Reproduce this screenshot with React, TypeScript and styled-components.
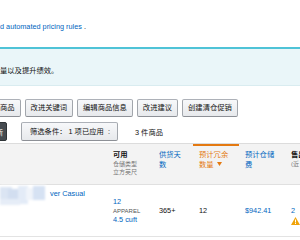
import React from "react";
import styled, { createGlobalStyle, css } from "styled-components";

const Global = createGlobalStyle`
  html, body { margin: 0; padding: 0; background: #fff; overflow: hidden; }
  body {
    font-family: "Liberation Sans", Arial, "Noto Sans CJK SC", sans-serif;
    font-size: 7.3px;
    color: #111;
  }
`;

const Page = styled.div`
  width: 300px;
  height: 240px;
  overflow: hidden;
`;

const TopNote = styled.div`
  height: 47px;
  box-sizing: border-box;
  padding-top: 22px;
  line-height: 10px;
  white-space: nowrap;
`;

const Link = styled.span`
  color: #0066c0;
`;

const InfoBox = styled.div`
  border-top: 2px solid #4fc3d7;
  border-bottom: 1px solid #d9ecf0;
  background: #eaf6f9;
  padding: 17px 0 9px;
  line-height: 10px;
  white-space: nowrap;
`;

const ButtonRow = styled.div`
  display: flex;
  gap: 4px;
  margin: 13px 0 0 -6px;
`;

const Button = styled.button`
  height: 18px;
  box-sizing: border-box;
  padding: 0 5px;
  border: 1px solid #adb1b8;
  border-color: #adb1b8 #a2a6ac #8d9096;
  border-radius: 2px;
  background: linear-gradient(#f7f8fa, #e7e9ec);
  font: inherit;
  color: #111;
  white-space: nowrap;
  line-height: 16px;
  flex: none;
`;

const FilterRow = styled.div`
  display: flex;
  align-items: center;
  margin-top: 5px;
  height: 19px;
`;

const DarkButton = styled.button`
  height: 19px;
  box-sizing: border-box;
  margin-left: -20px;
  width: 27px;
  padding: 0 3px 0 0;
  border: 1px solid #2f3437;
  border-radius: 2px;
  background: #454b50;
  color: #fff;
  font: inherit;
  text-align: right;
  white-space: nowrap;
  overflow: hidden;
  flex: none;
`;

const FilterButton = styled(Button)`
  height: 19px;
  width: 97px;
  margin-left: 14px;
  padding: 0 7px 0 8px;
  display: flex;
  align-items: center;
  justify-content: space-between;
`;

const Count = styled.span`
  margin-left: 17px;
  white-space: nowrap;
`;

const Table = styled.div`
  margin-top: 2px;
  border-top: 1px solid #dcdcdc;
  width: 345px;
`;

const cols = css`
  display: grid;
  grid-template-columns: 107px 46px 40px 46px 46px 60px;
`;

const HeaderRow = styled.div`
  ${cols};
  height: 40px;
  background: #f3f3f3;
  border-bottom: 1px solid #e0e0e0;
`;

const HeadCell = styled.div<{ $tone?: "dark" | "blue" | "orange"; $active?: boolean }>`
  padding: 6px 0 0 6px;
  line-height: 10px;
  white-space: nowrap;
  color: ${(p) => (p.$tone === "blue" ? "#0066c0" : p.$tone === "orange" ? "#e47911" : "#111")};
  font-weight: ${(p) => (p.$tone === "dark" ? 700 : 400)};
  ${(p) => p.$active && css`box-shadow: inset 0 2px 0 #e47911;`}
`;

const SubLine = styled.div`
  font-size: 6px;
  line-height: 8px;
  color: #767676;
  font-weight: 400;
`;

const Caret = styled.svg`
  width: 5px;
  height: 4px;
  margin-left: 3px;
  vertical-align: 1px;
`;

const DataRow = styled.div`
  ${cols};
  height: 51px;
  border-bottom: 1px solid #e3e3e3;
  align-items: center;
`;

const ProductCell = styled.div`
  align-self: start;
  display: flex;
  white-space: nowrap;
`;

const Mosaic = styled.svg`
  width: 46px;
  height: 21px;
  flex: none;
  filter: blur(1px);
`;

const Title = styled.span`
  color: #0066c0;
  margin-left: 4px;
  padding-top: 4px;
  line-height: 10px;
`;

const Cell = styled.div<{ $blue?: boolean }>`
  padding-left: 6px;
  line-height: 10px;
  white-space: nowrap;
  color: ${(p) => (p.$blue ? "#0066c0" : "#111")};
`;

const Small = styled.div`
  font-size: 6px;
  line-height: 8px;
  color: #555;
`;

const BlueLine = styled.div`
  color: #0066c0;
`;

const AlertCell = styled(Cell)`
  padding-top: 9px;
`;

const Warn = styled.svg`
  display: block;
  width: 9px;
  height: 8px;
  margin-top: 1px;
`;

export default function App() {
  return (
    <Page>
      <Global />
      <TopNote>
        <Link>d automated pricing rules</Link> .
      </TopNote>
      <InfoBox>量以及提升绩效。</InfoBox>
      <ButtonRow>
        <Button>商品</Button>
        <Button>改进关键词</Button>
        <Button>编辑商品信息</Button>
        <Button>改进建议</Button>
        <Button>创建清仓促销</Button>
      </ButtonRow>
      <FilterRow>
        <DarkButton>更新</DarkButton>
        <FilterButton>
          <span>筛选条件： 1 项已应用</span>
          <span>:</span>
        </FilterButton>
        <Count>3 件商品</Count>
      </FilterRow>
      <Table>
        <HeaderRow>
          <HeadCell />
          <HeadCell $tone="dark">
            可用
            <SubLine>仓储类型</SubLine>
            <SubLine>立方英尺</SubLine>
          </HeadCell>
          <HeadCell $tone="blue">
            供货天
            <br />数
          </HeadCell>
          <HeadCell $tone="orange" $active>
            预计冗余
            <br />
            数量
            <Caret viewBox="0 0 5 4">
              <path d="M0 0h5L2.5 4z" fill="#e47911" />
            </Caret>
          </HeadCell>
          <HeadCell $tone="blue">
            预计仓储
            <br />费
          </HeadCell>
          <HeadCell $tone="dark">
            售出率
            <SubLine>(近 30 天)</SubLine>
          </HeadCell>
        </HeaderRow>
        <DataRow>
          <ProductCell>
            <Mosaic viewBox="0 0 46 21">
              <rect x="0" y="0" width="46" height="21" fill="#fff" />
              <rect x="0" y="2" width="12" height="16" fill="#dbe5f3" />
              <rect x="8" y="4" width="12" height="14" fill="#d2def0" />
              <rect x="18" y="1" width="10" height="18" fill="#e3ebf7" />
              <rect x="26" y="3" width="8" height="12" fill="#f0f4fa" />
              <rect x="33" y="1" width="12" height="14" fill="#d6e2f3" />
              <rect x="0" y="14" width="20" height="6" fill="#e6edf7" />
            </Mosaic>
            <Title>ver Casual</Title>
          </ProductCell>
          <Cell>
            <BlueLine>12</BlueLine>
            <Small>APPAREL</Small>
            <BlueLine>4.5 cuft</BlueLine>
          </Cell>
          <Cell>365+</Cell>
          <Cell>12</Cell>
          <Cell $blue>$942.41</Cell>
          <AlertCell $blue>
            2
            <Warn viewBox="0 0 9 8">
              <path d="M4.5 0L9 8H0z" fill="#f0a30a" />
              <rect x="4" y="2.5" width="1" height="3" fill="#fff" />
              <rect x="4" y="6" width="1" height="1" fill="#fff" />
            </Warn>
          </AlertCell>
        </DataRow>
      </Table>
    </Page>
  );
}
